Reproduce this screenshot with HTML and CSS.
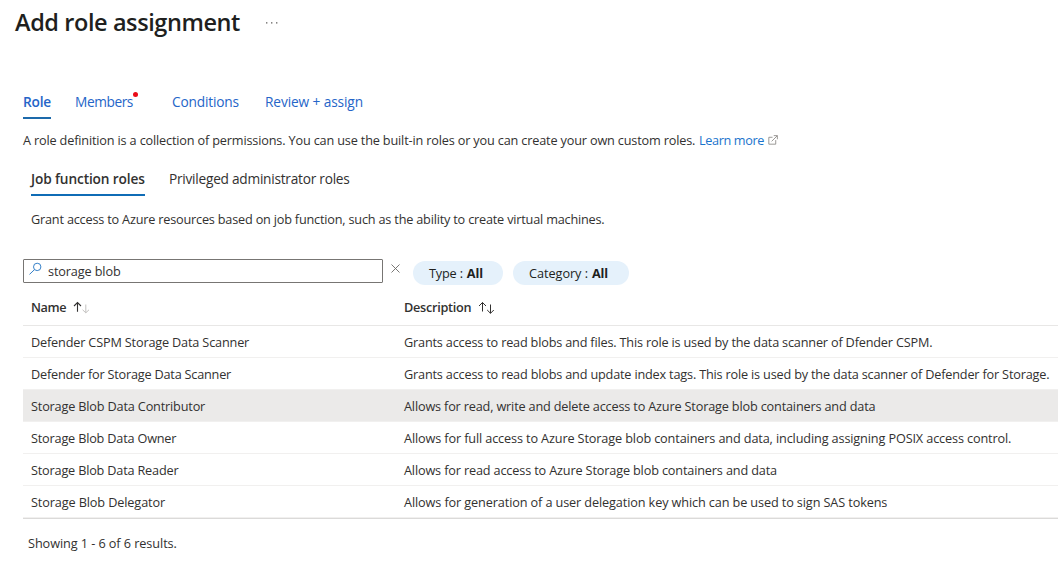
FILE: index.html
```html
<!DOCTYPE html>
<html lang="en">
<head>
<meta charset="utf-8">
<title>Add role assignment</title>
<link rel="stylesheet" href="styles.css">
</head>
<body>
<header class="page-header">
  <h1 class="page-title">Add role assignment</h1>
  <svg class="more" width="12" height="2" viewBox="0 0 12 2"><path d="M0 .3h1.4v1.2H0zM5 .3h1.4v1.2H5zM10 .3h1.4v1.2H10z" fill="#605e5c"/></svg>
</header>
<main class="content">
  <nav class="tabs">
    <a class="tab tab-active">Role</a>
    <a class="tab tab-members">Members<span class="dot"></span></a>
    <a class="tab tab-conditions">Conditions</a>
    <a class="tab tab-review">Review + assign</a>
  </nav>
  <p class="intro"><span class="intro-text">A role definition is a collection of permissions. You can use the built-in roles or you can create your own custom roles.</span><a class="learn">Learn more</a><svg class="ext" width="10" height="10" viewBox="0 0 11 11" fill="none" stroke="#86837f" stroke-width=".9"><path d="M5 2.5H.9v7.6h7.6V5.6M6.3.7h4v4M10.2.8L4 7"/></svg></p>
  <nav class="subtabs">
    <a class="subtab subtab-active">Job function roles</a>
    <a class="subtab">Privileged administrator roles</a>
  </nav>
  <p class="hint">Grant access to Azure resources based on job function, such as the ability to create virtual machines.</p>
  <div class="filters">
    <div class="search">
      <svg class="search-icon" width="14" height="14" viewBox="0 0 14 14" fill="none" stroke="#3580c8" stroke-width="1"><circle cx="8.2" cy="4.9" r="3.7"/><path d="M5.5 7.6L.5 12.4"/></svg>
      <span class="search-text">storage blob</span>
    </div>
    <svg class="clear" width="9" height="9" viewBox="0 0 9 9" fill="none" stroke="#6b6966" stroke-width=".9"><path d="M.5.5l8 8M8.5.5l-8 8"/></svg>
    <div class="pill pill-type"><span>Type :</span><b>All</b></div>
    <div class="pill pill-category"><span>Category :</span><b>All</b></div>
  </div>
  <section class="grid">
    <div class="row head">
      <div class="head-name">Name
        <svg width="17" height="13" viewBox="0 0 17 13" fill="none" stroke-width="1.1"><path d="M4.5 10.8V1.5M1 5l3.5-3.5L8 5" stroke="#323130"/><path d="M12.8 3.5v8.3M9.6 8.8l3.2 3 3.2-3" stroke="#c4c2c0" stroke-width="1"/></svg>
      </div>
      <div class="head-desc">Description
        <svg width="17" height="13" viewBox="0 0 17 13" fill="none" stroke="#323130" stroke-width="1"><path d="M4.5 10.5V1.5M1 5l3.5-3.5L8 5M12.5 3.5v8.8M9.2 9l3.3 3.3L15.8 9"/></svg>
      </div>
    </div>
    <div class="row r1"><span class="name">Defender CSPM Storage Data Scanner</span><span class="desc">Grants access to read blobs and files. This role is used by the data scanner of Dfender CSPM.</span></div>
    <div class="row r2"><span class="name">Defender for Storage Data Scanner</span><span class="desc">Grants access to read blobs and update index tags. This role is used by the data scanner of Defender for Storage.</span></div>
    <div class="row r3 selected"><span class="name">Storage Blob Data Contributor</span><span class="desc">Allows for read, write and delete access to Azure Storage blob containers and data</span></div>
    <div class="row r4"><span class="name">Storage Blob Data Owner</span><span class="desc">Allows for full access to Azure Storage blob containers and data, including assigning POSIX access control.</span></div>
    <div class="row r5"><span class="name">Storage Blob Data Reader</span><span class="desc">Allows for read access to Azure Storage blob containers and data</span></div>
    <div class="row r6"><span class="name">Storage Blob Delegator</span><span class="desc">Allows for generation of a user delegation key which can be used to sign SAS tokens</span></div>
  </section>
  <footer class="summary">Showing 1 - 6 of 6 results.</footer>
</main>
</body>
</html>
```
FILE: styles.css
```css
* { box-sizing: border-box; }
body {
  margin: 0;
  height: 564px;
  overflow: hidden;
  background: #fff;
  color: #323130;
  font: 12.7px/20px "Open Sans", "Noto Sans", sans-serif;
  letter-spacing: -0.17px;
  white-space: nowrap;
}
p { margin: 0; }

.page-header { display: flex; align-items: center; height: 46px; padding-left: 15px; }
.page-title { margin: 0; width: 251px; height: 46px; color: #201f1e; font-size: 23.5px; font-weight: 600; line-height: 44px; letter-spacing: -0.41px; }
.more { margin-top: -1px; }

.content { padding-left: 23px; }

.tabs { display: flex; height: 73px; padding-top: 44px; font-size: 13.7px; line-height: 24px; color: #2565c8; }
.tab-active { width: 28px; margin-right: 24px; border-bottom: 2px solid #1d6aab; font-weight: 600; letter-spacing: -0.22px; }
.tab-members { position: relative; width: 97px; letter-spacing: -0.41px; }
.dot { position: absolute; left: 58px; top: 2px; width: 5px; height: 5px; border-radius: 50%; background: #ea0c18; }
.tab-conditions { width: 93px; letter-spacing: -0.16px; }
.tab-review { letter-spacing: -0.11px; }

.intro { display: flex; height: 42px; line-height: 42px; letter-spacing: -0.165px; }
.intro-text { width: 676px; }
.learn { width: 69px; color: #1a74cc; letter-spacing: -0.37px; }
.ext { margin-top: 16px; }

.subtabs { display: flex; gap: 24px; height: 35px; padding: 6px 0 0 8px; font-size: 13.7px; line-height: 24px; letter-spacing: -0.25px; }
.subtab-active { width: 114px; border-bottom: 2px solid #0f6cb6; font-weight: 600; letter-spacing: -0.13px; }

.hint { height: 63px; padding: 13px 0 0 8px; letter-spacing: -0.197px; }

.filters { display: flex; height: 36px; }
.search { display: flex; width: 360px; height: 24px; padding-left: 5px; border: 1px solid #777573; border-radius: 1px; line-height: 22px; }
.search-icon { margin: 2px 5px 0 0; }
.search-text { letter-spacing: -0.13px; }
.clear { margin: 5px 13px 0 8px; }
.pill { display: flex; gap: 4px; height: 24px; margin: 2px 10px 0 0; padding-left: 16px; border-radius: 12px; background: #e5f1fb; color: #201f1e; line-height: 25px; }
.pill-type { width: 90px; }
.pill-category { width: 116px; letter-spacing: -0.04px; }
.pill b { font-weight: 700; letter-spacing: -0.17px; }

.grid { border-bottom: 1px solid #dbdad9; }
.row { display: grid; grid-template-columns: 373px 1fr; height: 32px; padding-left: 8px; border-bottom: 1px solid #f1f0ef; line-height: 33px; }
.head { height: 31px; border-color: #e8e7e6; line-height: 24px; font-weight: 600; }
.head-name, .head-desc { display: flex; letter-spacing: -0.4px; }
.head-desc { letter-spacing: -0.28px; }
.head-name svg, .head-desc svg { margin: 6px 0 0 7px; }
.selected { background: #ebeae9; border-color: #f1f0ef; }

.r1 .desc { letter-spacing: -0.185px; }
.r2 .name { letter-spacing: -0.21px; }
.r2 .desc { letter-spacing: -0.184px; }
.r4 .name, .r5 .name { letter-spacing: -0.19px; }
.r4 .desc { letter-spacing: -0.134px; }
.r5 .desc { letter-spacing: -0.155px; }
.r6 .name, .r6 .desc { letter-spacing: -0.12px; }

.summary { padding: 14px 0 0 5px; letter-spacing: -0.075px; }
```
